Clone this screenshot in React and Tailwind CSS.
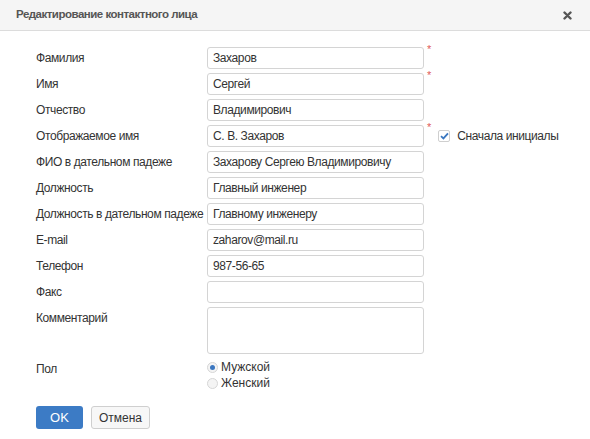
import React from 'react';

const fields = [
  { label: 'Фамилия', value: 'Захаров', required: true },
  { label: 'Имя', value: 'Сергей', required: true },
  { label: 'Отчество', value: 'Владимирович' },
  { label: 'Отображаемое имя', value: 'С. В. Захаров', required: true, initials: true },
  { label: 'ФИО в дательном падеже', value: 'Захарову Сергею Владимировичу' },
  { label: 'Должность', value: 'Главный инженер' },
  { label: 'Должность в дательном падеже', value: 'Главному инженеру' },
  { label: 'E-mail', value: 'zaharov@mail.ru' },
  { label: 'Телефон', value: '987-56-65' },
  { label: 'Факс', value: '' }
];

function Field({ label, value, required, initials }) {
  return (
    <div className="flex items-center h-[22px]">
      <div className="w-[171px] shrink-0 text-[12px] tracking-[-0.4px] text-[#333] whitespace-nowrap">{label}</div>
      <input
        readOnly
        value={value}
        className="w-[217px] h-[22px] border border-[#d4d4d4] rounded-[3px] px-[5px] text-[12px] tracking-[-0.4px] text-[#333] bg-white outline-none"
      />
      {required && <span className="self-start -mt-[3px] ml-[3px] text-[11px] text-[#e05a5a] leading-none">*</span>}
      {initials && (
        <label className="flex items-center ml-[7px] text-[12px] tracking-[-0.4px] text-[#333]">
          <span className="w-[12px] h-[12px] border border-[#cfcfcf] rounded-[2px] bg-white flex items-center justify-center mr-[7px]">
            <svg width="9" height="8" viewBox="0 0 9 8">
              <path d="M1 4.2 L3.4 6.4 L8 1.4" fill="none" stroke="#3b77c0" strokeWidth="1.8" />
            </svg>
          </span>
          Сначала инициалы
        </label>
      )}
    </div>
  );
}

function Radio({ checked, children }) {
  return (
    <div className="flex items-center h-[16px] text-[12px] text-[#333]">
      <span className="w-[11px] h-[11px] rounded-full border border-[#d6d6d6] bg-[#f4f4f4] flex items-center justify-center mr-[3px]">
        {checked && <span className="w-[5px] h-[5px] rounded-full bg-[#3b77c0]" />}
      </span>
      {children}
    </div>
  );
}

export default function App() {
  return (
    <div className="w-[590px] h-[439px] bg-white overflow-hidden" style={{ fontFamily: '"Liberation Sans", Arial, sans-serif' }}>
      <div className="h-[31px] bg-[#f5f5f5] border-b border-[#dcdcdc] flex items-center justify-between pl-[16px] pr-[18px]">
        <span className="text-[11.5px] font-bold text-[#555] tracking-[-0.5px]">Редактирование контактного лица</span>
        <svg width="9" height="9" viewBox="0 0 9 9">
          <path d="M1.5 1.5 L7.5 7.5 M7.5 1.5 L1.5 7.5" stroke="#555" strokeWidth="2.4" strokeLinecap="round" />
        </svg>
      </div>

      <div className="pl-[36px] pt-[16px]">
        <div className="flex flex-col gap-[4px]">
          {fields.map((f) => (
            <Field key={f.label} {...f} />
          ))}
          <div className="flex">
            <div className="w-[171px] shrink-0 h-[22px] flex items-center text-[12px] tracking-[-0.4px] text-[#333]">Комментарий</div>
            <textarea readOnly className="w-[217px] h-[47px] border border-[#d4d4d4] rounded-[3px] resize-none outline-none" />
          </div>
        </div>

        <div className="flex mt-[6px]">
          <div className="w-[171px] shrink-0 h-[16px] pt-[1px] text-[12px] tracking-[-0.4px] text-[#333] leading-[16px]">Пол</div>
          <div className="flex flex-col -mt-[1px]">
            <Radio checked>Мужской</Radio>
            <Radio>Женский</Radio>
          </div>
        </div>

        <div className="flex gap-[8px] mt-[15px]">
          <button className="w-[47px] h-[23px] rounded-[3px] bg-[#3c7bc5] text-white text-[13px]">OK</button>
          <button className="w-[59px] h-[23px] rounded-[3px] bg-[#f7f7f7] border border-[#cfcfcf] text-[#333] text-[12px]">Отмена</button>
        </div>
      </div>
    </div>
  );
}
